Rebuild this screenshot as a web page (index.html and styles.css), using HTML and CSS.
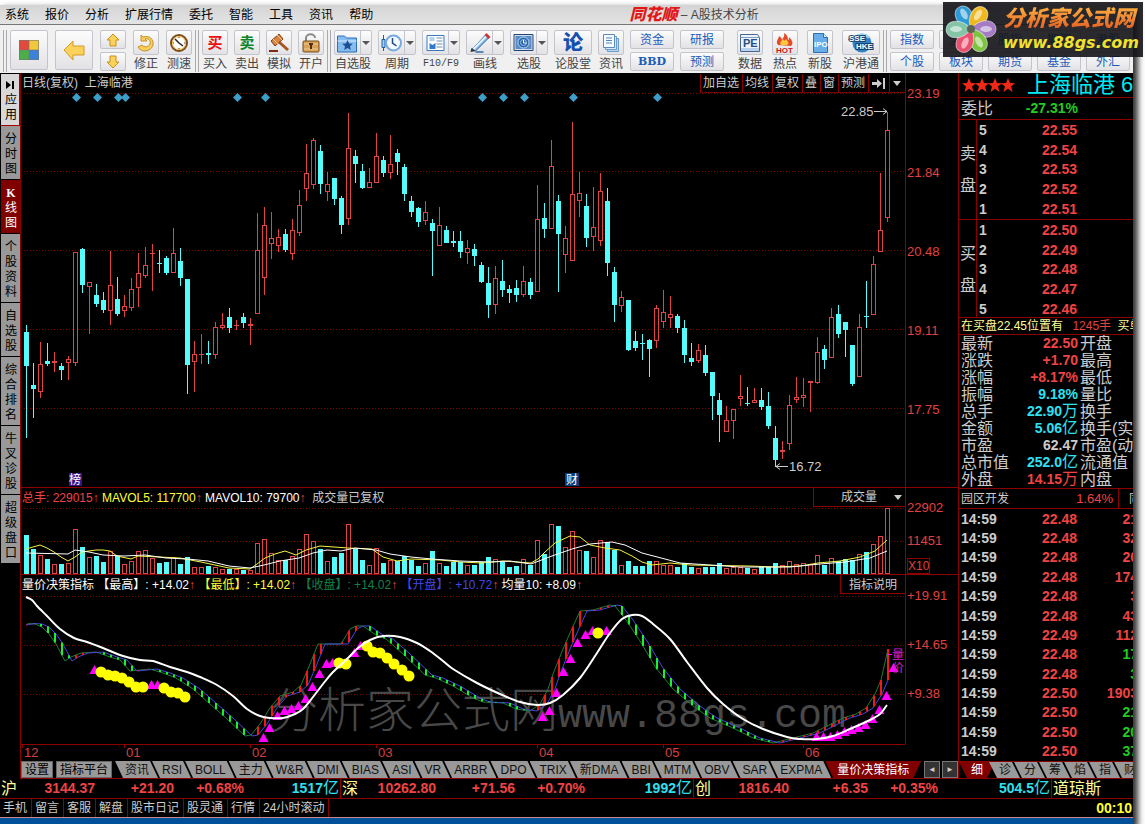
FILE: index.html
```html
<!DOCTYPE html>
<html lang="zh-CN">
<head>
  <meta charset="UTF-8">
  <meta name="viewport" content="width=device-width, initial-scale=1.0">
  <title>同花顺 - A股技术分析</title>
  <link rel="stylesheet" href="styles.css">
</head>
<body>
  <div class="window">
    <header class="menubar">
      <nav class="menu">
        <a href="#">系统</a>
        <a href="#">报价</a>
        <a href="#">分析</a>
        <a href="#">扩展行情</a>
        <a href="#">委托</a>
        <a href="#">智能</a>
        <a href="#">工具</a>
        <a href="#">资讯</a>
        <a href="#">帮助</a>
      </nav>
      <h1 class="title"><b>同花顺</b> – A股技术分析</h1>
    </header>

    <div class="toolbar">
      <span class="grip"></span>
      <div class="tool-group first">
        <button class="box big" aria-label="首页">
          <svg width="22" height="22" viewBox="0 0 22 22"><path fill="#e04a3c" d="M1 1h10v10H1z"/><path fill="#f0c83c" d="M11 1h10v10H11z"/><path fill="#4cae48" d="M1 11h10v10H1z"/><path fill="#3c80d8" d="M11 11h10v10H11z"/><path d="M1.500 1.500h19v19h-19zM11 1v20M1 11h20" fill="none" stroke="#777" stroke-opacity=".6"/></svg>
        </button>
        <button class="box big" aria-label="后退">
          <svg width="22" height="22" viewBox="0 0 22 22"><path d="M1 11 10 2v5h11v9H10v5z" fill="#fbd25a" stroke="#d59a22"/></svg>
        </button>
        <div class="stack">
          <button class="box half" aria-label="上一个"><svg width="14" height="14" viewBox="0 0 14 14"><path d="M7 1 13 7h-3v6H4V7H1z" fill="#fbd25a" stroke="#c98f1c"/></svg></button>
          <button class="box half" aria-label="下一个"><svg width="14" height="14" viewBox="0 0 14 14"><path d="M7 13 1 7h3V1h6v6h3z" fill="#fbd25a" stroke="#c98f1c"/></svg></button>
        </div>
        <button class="tool"><span class="box"><svg width="20" height="20" viewBox="0 0 20 20"><path d="M5 2v6h6L9 6c3-1 6 1 5 5-1 3-6 4-8 1L2 14c3 6 13 5 15-2 1-6-4-10-10-8z" fill="#f9cf58" stroke="#c4902a"/></svg></span>修正</button>
        <button class="tool"><span class="box"><svg width="20" height="20" viewBox="0 0 20 20"><circle cx="10" cy="10" r="8" fill="#fff" stroke="#7a4a1c" stroke-width="2"/><circle cx="10" cy="10" r="6.500" fill="none" stroke="#f0b83c"/><path d="M10 10 6 6M10 10l4 3" stroke="#222" stroke-width="1.500"/><path d="M10 4v1M10 15v1M4 10h1M15 10h1" stroke="#444"/></svg></span>测速</button>
      </div>
      <span class="grip"></span>
      <div class="tool-group">
        <button class="tool"><span class="box glyph buy-glyph">买</span>买入</button>
        <button class="tool"><span class="box glyph sell-glyph">卖</span>卖出</button>
        <button class="tool"><span class="box"><svg width="22" height="22" viewBox="0 0 22 22"><path d="m11 10 9 8" stroke="#a5561c" stroke-width="3"/><path d="m3 9 8-7 4 5-8 7z" fill="#d68540" stroke="#7c3c10"/><path d="m5 7 5 5M9 3l5 5" stroke="#f4c088"/><path d="M1 19h9" stroke="#7c2c10" stroke-width="2"/></svg></span>模拟</button>
        <button class="tool"><span class="box"><svg width="22" height="22" viewBox="0 0 22 22"><path d="M6 10V6c0-5 9-5 9 0" fill="none" stroke="#8a8a8a" stroke-width="2"/><rect x="3" y="9" width="16" height="11" rx="1" fill="#d8a258" stroke="#754a18"/><path d="M4 12h14M4 17h14" stroke="#f2cc90"/><path d="M9 12h4M11 12v5" stroke="#543010" stroke-width="2"/></svg></span>开户</button>
      </div>
      <span class="grip"></span>
      <div class="tool-group">
        <button class="tool wide"><span class="box split"><svg width="22" height="22" viewBox="0 0 22 22"><path d="M1 4h7l2 2h10v14H1z" fill="#86bdf0" stroke="#2d6cb8"/><path d="M1 9h19" stroke="#d6ebff"/><path d="m11 8 1.600 3.400 3.700.4-2.800 2.500.8 3.700-3.300-1.900L7.700 18l.8-3.700-2.800-2.500 3.700-.4z" fill="#1d4f94"/></svg><i></i></span>自选股</button>
        <button class="tool wide"><span class="box split"><svg width="22" height="22" viewBox="0 0 22 22"><path d="M3 3v16" stroke="#1f5ca8"/><path d="M1.500 7.500h3v8h-3z" fill="#9cd0ff" stroke="#1f5ca8"/><circle cx="13" cy="11" r="7.500" fill="#f3f9ff" stroke="#78a9dc" stroke-width="2"/><path d="M12 6v5l4 3" fill="none" stroke="#1f4888" stroke-width="1.500"/></svg><i></i></span>周期</button>
        <button class="tool wide"><span class="box split"><svg width="22" height="22" viewBox="0 0 22 22"><path d="M2.500 3.500h17v15h-17z" fill="#fff" stroke="#3978bd"/><path d="M5 6h5M5 8h5" stroke="#64a4e4"/><path d="M5 11h6v6H5z" fill="#2f7bd0"/><path d="m5 11 3 2 3-2" fill="#fff"/><path d="M12 6h6M12 9h6M12 12h6M12 15h6" stroke="#6c8fb0"/></svg><i></i></span><span class="mono">F10/F9</span></button>
        <button class="tool wide"><span class="box split"><svg width="22" height="22" viewBox="0 0 22 22"><path d="M3 18 17 3l3 3L7 19z" fill="#8abced" stroke="#285c9c"/><path d="m5 17 13-13" stroke="#e4f3ff" stroke-width="2"/><path d="m16 3 2-2 4 4-2 2z" fill="#c83838"/><path d="m2 20 1-4 4 3z" fill="#333"/><path d="M7 20h8" stroke="#2e68a8" stroke-width="1.500"/></svg><i></i></span>画线</button>
        <button class="tool wide"><span class="box split"><svg width="22" height="22" viewBox="0 0 22 22"><path d="M1.500 2.500h19v16h-19z" fill="#d1dded" stroke="#244474"/><path d="M3 4h16v13H3z" fill="#5c8cc8"/><circle cx="11" cy="10.500" r="5.500" fill="#2c62a6" stroke="#b8dcfa"/><circle cx="11" cy="10.500" r="3" fill="none" stroke="#92c5f4"/><path d="M11 8v3h3" fill="none" stroke="#fff"/></svg><i></i></span>选股</button>
        <button class="tool wide"><span class="box glyph forum-glyph">论</span>论股堂</button>
        <button class="tool"><span class="box"><svg width="20" height="20" viewBox="0 0 20 20"><path d="M6.500 5.500h11v13h-11z" fill="#b8d8f5" stroke="#6e9cc8"/><path d="M4.500 3.500h11v13h-11z" fill="#d4e9fb" stroke="#6e9cc8"/><path d="M2.500 1.500h11v13h-11z" fill="#f6fbff" stroke="#5a8cbf"/><path d="M5 5h6M5 7.500h6M5 10h6" stroke="#4f87bf"/></svg></span>资讯</button>
        <div class="stack"><button class="box link">资金</button><button class="box link serif">BBD</button></div>
        <div class="stack"><button class="box link">研报</button><button class="box link">预测</button></div>
      </div>
      <div class="tool-group apart">
        <button class="tool"><span class="box"><svg width="22" height="22" viewBox="0 0 22 22"><path d="M1.500 2.500h17l2 3v14h-19z" fill="#ecf3fa" stroke="#49698c"/><path d="M2 16h18v3H2z" fill="#b8d0ec"/><path d="M1.500 5.500h19" stroke="#7c9cc0"/><text x="4" y="15" font-size="11" font-weight="bold" fill="#234f86" font-family="Liberation Sans, sans-serif">PE</text></svg></span>数据</button>
        <button class="tool"><span class="box"><svg width="22" height="22" viewBox="0 0 22 22"><path d="M4 13C1 9 5 7 5 4c2 1 3 3 3 4 1-2 3-4 2-7 4 2 4 6 4 7 1 0 1-2 1-3 3 3 5 6 2 9z" fill="#e44a28"/><path d="M7 13c-2-3 1-4 2-6 1 2 2 2 3 0 2 3 4 4 1 6z" fill="#ffc83c"/><text x="2" y="21" font-size="8" font-weight="bold" fill="#c81818" font-family="Liberation Sans, sans-serif">HOT</text></svg></span>热点</button>
        <button class="tool"><span class="box"><svg width="20" height="22" viewBox="0 0 20 22"><path d="M3.500 1.500h10l4 4v15h-14z" fill="#69aee9" stroke="#2c6eb0"/><path d="M13.500 1.500v4h4" fill="#dff0ff" stroke="#2c6eb0"/><text x="4" y="15" font-size="8" font-weight="bold" fill="#fff" font-family="Liberation Sans, sans-serif">IPO</text></svg></span>新股</button>
        <button class="tool wide"><span class="box"><svg width="26" height="22" viewBox="0 0 26 22"><circle cx="14" cy="11" r="9.500" fill="#2f83c5"/><path d="M7 5c4-4 11-3 14 1" fill="none" stroke="#9cd4f6" stroke-width="2"/><g font-size="8" font-weight="bold" font-family="Liberation Sans, sans-serif" fill="#fff" stroke="#17426e" stroke-width="2" paint-order="stroke"><text x="1" y="9">SSE</text><text x="8" y="17">HKE</text></g></svg></span>沪港通</button>
      </div>
      <span class="grip"></span>
      <div class="tool-group tight">
        <div class="stack"><button class="box link">指数</button><button class="box link">个股</button></div>
        <div class="stack"><button class="box link">全球</button><button class="box link">板块</button></div>
        <div class="stack"><button class="box link">股指</button><button class="box link">期货</button></div>
        <div class="stack"><button class="box link">期权</button><button class="box link">基金</button></div>
        <div class="stack"><button class="box link">港股</button><button class="box link">外汇</button></div>
      </div>
    </div>

    <main class="main">
      <nav class="side">
        <button class="light"><svg width="9" height="8" viewBox="0 0 9 8"><path d="m0 0 5 4-5 4zM6 0h2v8H6z"/></svg>应用</button>
        <button>分时图</button>
        <button class="on"><b>K</b>线图</button>
        <button>个股资料</button>
        <button>自选股</button>
        <button>综合排名</button>
        <button>牛叉诊股</button>
        <button>超级盘口</button>
      </nav>

      <div class="center">
        <section class="panel">
          <div class="plot">
            <div class="plot-head">
              <h2>日线(复权)&nbsp; 上海临港</h2>
              <div class="chart-tools">
                <button>加自选</button><button>均线</button><button>复权</button><button>叠</button><button>窗</button><button>预测</button><button aria-label="跳到最后"><svg width="13" height="11" viewBox="0 0 13 11"><path d="M0 4h5V1l5 4.500L5 10V7H0zM11 0h2v11h-2z" fill="#ccc"/></svg></button><button aria-label="更多"><svg width="8" height="5" viewBox="0 0 8 5"><path d="M0 0h8L4 5z" fill="#ccc"/></svg></button>
              </div>
            </div>
            <svg id="price" viewBox="21 93 884 394"></svg>
          </div>
          <div class="axis price-axis"><span>23.19</span><span>21.84</span><span>20.48</span><span>19.11</span><span>17.75</span></div>
        </section>

        <section class="panel">
          <div class="plot">
            <div class="plot-head volume-head">
              <p><span class="red">总手: 229015↑</span> <span class="yellow">MAVOL5: 117700</span><span class="red">↑</span> <span class="white">MAVOL10: 79700</span><span class="red">↑</span>&nbsp; 成交量已复权</p>
              <label class="pick"><select aria-label="指标"><option>成交量</option></select><svg width="8" height="5" viewBox="0 0 8 5"><path d="M0 0h8L4 5z" fill="#ccc"/></svg></label>
            </div>
            <svg id="volume" viewBox="21 508 884 66"></svg>
          </div>
          <div class="axis volume-axis"><span>22902</span><span>11451</span><span class="unit">X10</span></div>
        </section>

        <section class="panel">
          <div class="plot">
            <div class="plot-head">
              <p><span class="white">量价决策指标 【最高】: +14.02</span><span class="red">↑</span> <span class="yellow">【最低】: +14.02</span><span class="red">↑</span> <span class="dkgreen">【收盘】: +14.02</span><span class="red">↑</span> <span class="blue">【开盘】: +10.72</span><span class="red">↑</span> <span class="white">均量10: +8.09</span><span class="red">↑</span></p>
              <button class="explain">指标说明</button>
            </div>
            <svg id="signal" viewBox="21 594 884 149"></svg>
          </div>
          <div class="axis signal-axis"><span>+19.91</span><span>+14.65</span><span>+9.38</span></div>
        </section>
        <svg id="months" viewBox="21 743 937 17"></svg>

        <nav class="tabs">
          <button class="square">设置</button>
          <button class="square">指标平台</button>
          <div class="slants">
            <button>资讯</button><button>RSI</button><button>BOLL</button><button>主力</button><button>W&amp;R</button><button>DMI</button><button>BIAS</button><button>ASI</button><button>VR</button><button>ARBR</button><button>DPO</button><button>TRIX</button><button>新DMA</button><button>BBI</button><button>MTM</button><button>OBV</button><button>SAR</button><button>EXPMA</button><button class="on">量价决策指标</button>
          </div>
          <div class="scroll"><button aria-label="向左">◄</button><button aria-label="向右">►</button></div>
        </nav>
      </div>

      <aside class="quote">
        <h2 class="stock"><svg width="54" height="14" viewBox="0 0 54 14"><defs><path id="star" d="m7 0 2 5 5 .2-4 3.200L11.500 14 7 10.700 2.500 14 4 8.400 0 5.200 5 5z" fill="#f02818"/></defs><use href="#star"/><use href="#star" x="13"/><use href="#star" x="26"/><use href="#star" x="39"/></svg><span>上海临港 6</span></h2>
        <p class="ratio"><span>委比</span><b>-27.31%</b></p>
        <div class="book">
          <span class="side-name">卖盘</span>
          <table>
            <tr><th>5</th><td>22.55</td></tr>
            <tr><th>4</th><td>22.54</td></tr>
            <tr><th>3</th><td>22.53</td></tr>
            <tr><th>2</th><td>22.52</td></tr>
            <tr><th>1</th><td>22.51</td></tr>
          </table>
        </div>
        <div class="book bids">
          <span class="side-name">买盘</span>
          <table>
            <tr><th>1</th><td>22.50</td></tr>
            <tr><th>2</th><td>22.49</td></tr>
            <tr><th>3</th><td>22.48</td></tr>
            <tr><th>4</th><td>22.47</td></tr>
            <tr><th>5</th><td>22.46</td></tr>
          </table>
        </div>
        <p class="notice">在买盘22.45位置有 <span class="hands">1245手</span> 买单</p>
        <table class="stats">
          <tr><th>最新</th><td class="red">22.50</td><th>开盘</th></tr>
          <tr><th>涨跌</th><td class="red">+1.70</td><th>最高</th></tr>
          <tr><th>涨幅</th><td class="red">+8.17%</td><th>最低</th></tr>
          <tr><th>振幅</th><td class="cyan">9.18%</td><th>量比</th></tr>
          <tr><th>总手</th><td class="cyan">22.90<i>万</i></td><th>换手</th></tr>
          <tr><th>金额</th><td class="cyan">5.06<i>亿</i></td><th>换手(实)</th></tr>
          <tr><th>市盈</th><td>62.47</td><th>市盈(动)</th></tr>
          <tr><th>总市值</th><td class="cyan">252.0<i>亿</i></td><th>流通值</th></tr>
          <tr><th>外盘</th><td class="red">14.15<i>万</i></td><th>内盘</th></tr>
        </table>
        <p class="sector"><span>园区开发</span><span class="red">1.64%</span><span class="cut">同</span></p>
        <table class="ticks" id="ticks"></table>
        <nav class="tabs quote-tabs">
          <div class="slants"><button class="on">细</button><button>诊</button><button>分</button><button>筹</button><button>焰</button><button>指</button><button>财</button></div>
        </nav>
      </aside>
    </main>

    <div class="indices">
      <p><span>沪</span><b>3144.37</b><b>+21.20</b><b>+0.68%</b><b class="cyan">1517<i>亿</i></b></p>
      <p><span>深</span><b>10262.80</b><b>+71.56</b><b>+0.70%</b><b class="cyan">1992<i>亿</i></b></p>
      <p><span>创</span><b>1816.40</b><b>+6.35</b><b>+0.35%</b><b class="cyan">504.5<i>亿</i></b></p>
      <p><span>道琼斯</span></p>
    </div>
    <footer class="status">
      <a href="#">手机</a><a href="#">留言</a><a href="#">客服</a><a href="#">解盘</a><a href="#">股市日记</a><a href="#">股灵通</a><a href="#">行情</a><a href="#">24小时滚动</a>
      <time>00:10</time>
    </footer>
  </div>

  <div class="site-badge">
    <svg width="54" height="54" viewBox="0 0 54 54">
      <defs><path id="petal" d="M27 27C15 18 17 2 27 2s12 16 0 25z"/></defs>
      <g stroke="#fff" stroke-opacity=".5">
        <use href="#petal" fill="#2d9ad8" transform="rotate(-28 27 27)"/>
        <use href="#petal" fill="#f0b820" transform="rotate(32 27 27)"/>
        <use href="#petal" fill="#a57cc4" transform="rotate(90 27 27)"/>
        <use href="#petal" fill="#7cc440" transform="rotate(150 27 27)"/>
        <use href="#petal" fill="#ea5070" transform="rotate(205 27 27)"/>
        <use href="#petal" fill="#86c4a8" transform="rotate(268 27 27)"/>
      </g>
      <g fill="#fff" fill-opacity=".55">
        <ellipse cx="20" cy="12" rx="3" ry="6" transform="rotate(-28 20 12)"/>
        <ellipse cx="34" cy="13" rx="3" ry="6" transform="rotate(32 34 13)"/>
        <ellipse cx="42" cy="27" rx="6" ry="3"/>
        <ellipse cx="35" cy="40" rx="3" ry="6" transform="rotate(-30 35 40)"/>
        <ellipse cx="21" cy="41" rx="3" ry="6" transform="rotate(25 21 41)"/>
        <ellipse cx="12" cy="27" rx="6" ry="3"/>
      </g>
      <circle cx="27" cy="27" r="4" fill="#5c6454"/>
    </svg>
    <p><b>分析家公式网</b><em>www.88gs.com</em></p>
  </div>

  <script>
    const RED = '#e04444';
    const CYAN = '#54fcfc';
    const STEP = 7;
    const LEFT = 24;

    // direction, high, body top, body bottom, low, volume top
    const candles = [
      'd325 332 366 438 535', 'd363 385 389 418 549', 'u342 364 392 398 555', 'd343 361 364 366 559', 'u352 361 363 372 564',
      'd363 366 370 380 564', 'u356 359 363 380 563', 'u252 252 363 366 529', 'd248 249 285 293 547', 'u282 282 287 334 557',
      'd284 295 304 307 556', 'd292 300 310 313 562', 'u251 285 311 325 551', 'd277 299 314 316 556', 'u295 306 311 317 564',
      'u278 289 308 311 561', 'u253 273 288 307 551', 'u247 265 276 278 550', 'u244 253 254 291 558', 'd250 263 264 273 563',
      'd256 258 273 275 562', 'u228 253 273 273 557', 'd248 261 278 286 564', 'd279 279 365 394 557', 'u341 354 362 392 567',
      'u334 354 355 364 567', 'd341 353 355 364 566', 'u322 327 355 359 567', 'u313 325 328 329 569', 'd308 317 328 333 569',
      'u320 325 326 330 569', 'd313 317 323 328 570', 'u318 324 326 345 570', 'u213 250 314 314 543', 'u207 225 278 295 539',
      'u212 238 244 259 553', 'u229 237 246 252 560', 'd229 234 250 252 560', 'u219 230 254 260 556', 'u190 205 233 236 549',
      'u144 173 189 201 534', 'u138 140 185 189 541', 'd145 151 184 194 549', 'u172 184 192 201 561', 'd178 178 199 205 557',
      'd196 198 225 234 553', 'u113 148 219 225 524', 'd150 156 164 183 549', 'd164 171 188 189 560', 'u168 182 188 188 565',
      'u133 156 183 183 548', 'd156 160 173 177 563', 'u135 164 173 179 560', 'd149 153 162 175 561', 'd164 167 194 201 556',
      'd196 201 212 217 560', 'd207 208 222 227 566', 'u201 212 221 225 563', 'd219 223 231 276 551', 'u207 225 246 246 563',
      'd226 230 243 243 566', 'd231 241 243 247 562', 'd231 241 252 258 562', 'u240 248 253 264 565', 'd244 249 256 266 565',
      'd262 265 282 283 562', 'd267 283 305 318 557', 'u266 278 305 314 559', 'd260 281 290 297 562', 'd285 289 293 303 567',
      'd280 288 295 302 566', 'u266 281 295 297 559', 'd278 282 295 299 565', 'u185 219 292 292 540', 'd203 218 229 238 554',
      'u140 166 229 229 524', 'd195 201 234 292 526', 'u226 238 255 273 547', 'u122 194 261 261 531', 'u172 193 201 217 550',
      'd194 206 238 247 551', 'u187 227 237 251 557', 'u173 191 241 246 540', 'd188 201 263 276 542', 'd267 272 305 322 550',
      'u291 297 306 312 565', 'd300 300 350 351 561', 'd331 341 348 351 566', 'd334 343 344 360 566', 'd339 340 349 377 561',
      'u305 308 341 348 561', 'u290 312 322 328 565', 'u296 314 318 328 565', 'd314 316 328 333 567', 'd320 328 355 363 563',
      'd343 358 362 366 567', 'u344 350 361 363 568', 'd345 355 373 376 567', 'd372 372 396 420 567', 'd393 400 415 442 563',
      'u406 420 432 432 568', 'u409 409 421 439 567', 'u375 396 399 406 567', 'd387 403 404 406 568', 'u388 400 403 403 569',
      'd388 400 407 410 567', 'd392 406 426 429 567', 'd426 438 460 467 563', 'u441 450 452 459 565', 'u395 405 444 450 561',
      'u377 397 400 403 564', 'u378 395 398 407 563', 'u381 381 383 412 564', 'u337 352 383 384 555', 'd345 349 360 369 565',
      'u308 317 358 358 558', 'd305 314 334 338 561', 'd322 322 330 357 559', 'd345 345 384 386 560', 'u314 327 377 377 554',
      'd281 316 317 328 552', 'u256 264 315 315 544', 'u173 230 252 252 536', 'u112 130 218 222 508'
    ].map(row => ({ up: row[0] === 'u', v: row.slice(1).split(' ').map(Number) }));

    function box(x, top, bottom, up) {
      if (!up || bottom - top < 3) {
        return `<path d="M${x} ${top}h5v${Math.max(bottom - top, 1)}h-5z" fill="${up ? RED : CYAN}"/>`;
      }
      return `<path d="M${x + 0.5} ${top + 0.5}h4v${bottom - top - 1}h-4z" fill="#000" stroke="${RED}"/>`;
    }

    function dotted(rows) {
      return rows.map(y => `<path class="grid" d="M24 ${y}.5H905"/>`).join('');
    }

    // curve through all points
    function smooth(points) {
      let d = 'M' + points[0];
      for (let k = 0; k < points.length - 1; k++) {
        const a = points[Math.max(k - 1, 0)];
        const b = points[k];
        const c = points[k + 1];
        const e = points[Math.min(k + 2, points.length - 1)];
        d += `C${b[0] + (c[0] - a[0]) / 6} ${b[1] + (c[1] - a[1]) / 6} ${c[0] - (e[0] - b[0]) / 6} ${c[1] - (e[1] - b[1]) / 6} ${c[0]} ${c[1]}`;
      }
      return d;
    }

    // price chart
    const notices = [76, 97, 118, 125, 237, 265, 482, 503, 524, 573, 657];
    let price = dotted([93, 171, 250, 329, 408]);
    candles.forEach((c, i) => {
      const x = LEFT + i * STEP;
      const [high, top, bottom, low] = c.v;
      price += `<path d="M${x + 2.5} ${high}V${low}" stroke="${c.up ? RED : CYAN}"/>` + box(x, top, bottom, c.up);
    });
    price = `<g shape-rendering="crispEdges">${price}</g>`;
    notices.forEach(x => {
      price += `<path d="M${x - 4} 97.500l4.500-4.500 4.500 4.500-4.500 4.500z" fill="#3c9fc8"/>`;
    });
    price += `
      <text x="841" y="116" class="mark">22.85</text>
      <path d="M874 111.500h13m-4-3 4 3-4 3" fill="none" stroke="#ccc"/>
      <text x="789" y="471" class="mark">16.72</text>
      <path d="M788 466.500h-12m4-3-4 3 4 3" fill="none" stroke="#ccc"/>
      <rect x="69" y="473" width="13" height="13" fill="#3c1482"/><text x="69" y="484" class="flag">榜</text>
      <rect x="565" y="473" width="14" height="13" fill="#0c3c78"/><text x="566" y="484" class="flag">财</text>`;
    document.getElementById('price').innerHTML = price;

    // volume chart
    const ma5 = '26,549 33,547 40,545 47,548 54,552 61,557 68,561 75,557 82,552 96,550 103,550 110,551 117,556 131,559 138,556 159,557 180,558 201,562 215,565 229,568 250,569 257,564 265,558 275,554 285,551 296,555 306,550 320,546 334,547 348,548 372,549 383,557 397,561 411,559 440,560 461,562 482,563 503,561 531,563 538,559 545,552 555,543 570,536 580,537 590,545 605,548 620,550 632,556 642,562 652,565 670,563 690,565 750,566 775,567 800,566 818,563 840,561 860,557 875,551 887,540';
    const ma10 = '26,553 68,554 75,550 89,552 103,555 124,556 145,555 166,558 187,559 208,561 229,566 250,568 264,565 280,561 299,558 313,553 327,550 341,551 355,548 376,550 390,554 411,557 432,559 460,561 490,562 510,561 531,564 552,556 572,549 590,544 612,542 625,545 642,553 665,559 680,563 710,565 740,567 790,567 820,564 845,562 870,558 887,551';
    let volume = dotted([508, 541]);
    candles.forEach((c, i) => {
      volume += box(LEFT + i * STEP, c.v[4], 574, c.up);
    });
    document.getElementById('volume').innerHTML = `<g shape-rendering="crispEdges">${volume}</g>
      <polyline points="${ma5}" fill="none" stroke="#f4f440"/>
      <polyline points="${ma10}" fill="none" stroke="#fff"/>`;

    // signal chart
    const base = [[26, 624], [35, 622.5], [42, 623], [49, 626], [56, 633], [63, 643], [72, 660], [78, 656], [88, 652], [103, 651], [117, 656], [127, 659], [137, 670], [157, 668], [170, 672], [183, 677], [200, 688], [217, 703], [233, 717], [252, 735], [258, 734], [267, 723], [277, 707], [287, 695], [300, 691], [308, 684], [317, 663], [325, 643], [348, 643], [357, 628], [363, 625], [370, 625], [383, 634], [393, 638], [410, 653], [432, 674], [443, 677], [460, 685], [480, 697], [490, 701], [510, 702], [523, 708], [537, 710], [547, 703], [555, 688], [560, 673], [570, 648], [577, 632], [587, 610], [600, 609], [617, 604], [622, 605], [633, 619], [647, 640], [663, 667], [680, 688], [700, 705], [717, 717], [740, 727], [760, 737], [780, 742], [800, 737], [820, 732], [850, 717], [863, 713], [873, 707], [882, 693], [888, 679], [895, 648]];

    function baseAt(x) {
      for (let k = 1; k < base.length; k++) {
        const [x0, y0] = base[k - 1];
        const [x1, y1] = base[k];
        if (x <= x1) return y0 + (y1 - y0) * (x - x0) / (x1 - x0);
      }
      return base[base.length - 1][1];
    }

    const average = [[26, 596], [32, 599], [37, 605], [47, 615], [60, 628], [74, 637], [87, 641], [103, 647], [123, 655], [140, 659], [153, 660], [170, 666], [187, 671], [200, 676], [217, 684], [233, 695], [247, 708], [260, 715], [270, 717], [283, 717], [295, 713], [303, 708], [313, 696], [323, 683], [333, 671], [347, 658], [358, 647], [370, 639], [383, 635], [400, 636], [417, 642], [430, 650], [443, 660], [453, 668], [477, 682], [500, 693], [520, 701], [537, 704], [550, 702], [563, 694], [580, 677], [597, 652], [610, 632], [622, 618], [632, 614], [642, 615], [653, 623], [670, 638], [687, 661], [707, 687], [723, 703], [743, 718], [763, 728], [787, 736], [800, 738], [817, 738], [833, 735], [850, 728], [870, 719], [880, 713], [887, 704]];
    const triangles = [[94, 669], [151, 684], [157, 684], [263, 737], [269, 727], [277, 715], [284, 710], [291, 708], [298, 705], [305, 698], [312, 686], [319, 673], [326, 663], [332, 662], [354, 652], [360, 645], [542, 716], [549, 710], [556, 692], [563, 671], [570, 658], [577, 642], [585, 634], [592, 630], [606, 630], [816, 736], [823, 736], [830, 736], [837, 734], [844, 731], [851, 729], [858, 727], [865, 724], [872, 718], [879, 709], [886, 695], [893, 667]];
    const dots = [[101, 671], [108, 674], [115, 675], [122, 677], [129, 681], [136, 686], [143, 686], [164, 687], [171, 691], [178, 692], [185, 696], [339, 662], [346, 663], [367, 645], [373, 651], [380, 652], [387, 657], [394, 663], [402, 669], [409, 675], [598, 632]];

    let signal = `<g shape-rendering="crispEdges">${dotted([595, 644, 693])}</g>
      <text x="270" y="726" class="stamp">分析家公式网<tspan class="stamp-url">www.88gs.com</tspan></text>`;
    const open = base.filter(p => p[0] < 890).map(p => p.join(','));
    const close = base.slice(1).map(p => (p[0] - 7) + ',' + p[1]);
    signal += `<polyline points="${close.join(' ')}" fill="none" stroke="#1c7c30"/>
      <polyline points="${open.join(' ')}" fill="none" stroke="#4646dc"/>`;
    candles.forEach((c, i) => {
      const x = LEFT + i * STEP + 3;
      const from = baseAt(x);
      const to = baseAt(x + 7);
      signal += `<path d="M${x} ${from}V${to}" stroke="${to < from ? '#f01818' : '#18f030'}" stroke-width="2"/>`;
    });
    triangles.forEach(([x, y]) => {
      signal += `<path d="M${x + 0.5} ${y - 5}l5 9h-10z" fill="#f0f"/>`;
    });
    dots.forEach(([x, y]) => {
      signal += `<circle cx="${x}" cy="${y}" r="5.500" fill="#ff0"/>`;
    });
    signal += `<path d="${smooth(average)}" fill="none" stroke="#fff" stroke-width="2"/>
      <path d="M887 653.500h5" stroke="#f0f"/>
      <text x="892" y="658" class="hint">量</text><text x="892" y="671" class="hint">价</text>`;
    document.getElementById('signal').innerHTML = signal;

    const months = [['12', 22], ['01', 124], ['02', 250], ['03', 376], ['04', 537], ['05', 663], ['06', 803]];
    document.getElementById('months').innerHTML = '<path d="M21 743.500H905" stroke="#8c0000"/>' + months.map(([name, x]) =>
      `<path d="M${x}.5 743v4" stroke="#8c0000"/><text x="${x + 2}" y="756" class="month">${name}</text>`).join('');

    const ticks = [
      ['22.48', 21, 'red'], ['22.48', 32, 'red'], ['22.48', 20, 'red'], ['22.48', 174, 'red'], ['22.48', 3, 'red'],
      ['22.48', 43, 'red'], ['22.49', 112, 'red'], ['22.48', 17, 'green'], ['22.48', 3, 'green'], ['22.50', 1903, 'red'],
      ['22.50', 21, 'green'], ['22.50', 20, 'green'], ['22.50', 37, 'green']
    ];
    document.getElementById('ticks').innerHTML = ticks.map(([p, n, color]) =>
      `<tr><th>14:59</th><td class="red">${p}</td><td class="${color}">${n}</td></tr>`).join('');
  </script>
</body>
</html>
```
FILE: styles.css
```css
* {
  box-sizing: border-box;
}

body {
  margin: 0;
  padding: 5px 12px 0 0;
  background: #fff;
  font-family: "Liberation Sans", "Noto Sans CJK SC", sans-serif;
  font-size: 12px;
  line-height: 16px;
  color: #ccc;
  overflow: hidden;
}

h1, h2, p {
  margin: 0;
  font-size: inherit;
  font-weight: normal;
}

a {
  color: inherit;
  text-decoration: none;
}

i {
  font-style: normal;
  font-weight: normal;
}

button, select {
  margin: 0;
  padding: 0;
  border: none;
  background: none;
  color: inherit;
  font: inherit;
  white-space: nowrap;
}

table {
  border-collapse: collapse;
}

th, td {
  padding: 0;
  text-align: left;
}

svg {
  display: block;
  flex: none;
}

.red { color: #f04444; }
.yellow { color: #ff3; }
.white { color: #fff; }
.cyan { color: #30e0f0; }
.green { color: #2c2; }
.dkgreen { color: #148048; }
.blue { color: #4646e6; }

.window {
  background: #000;
  border-bottom: 6px solid #00509a;
  box-shadow: 4px 4px 6px 1px #333;
}

/* menu and toolbar */
.menubar {
  display: flex;
  align-items: center;
  height: 20px;
  padding-left: 5px;
  border-bottom: 1px solid #777;
  background: linear-gradient(#d4d4d4, #e4e4e4);
  color: #000;
}

.menu {
  display: flex;
  gap: 16px;
}

.title {
  flex: 1;
  padding-right: 118px;
  text-align: center;
  color: #444;
}

.title b {
  color: #e01818;
  font-size: 16px;
  font-style: italic;
  font-weight: 900;
  vertical-align: -1px;
}

.toolbar {
  display: flex;
  height: 48px;
  padding-top: 5px;
  background: #f0f0f0;
  overflow: hidden;
}

.grip {
  flex: none;
  width: 4px;
  height: 42px;
  margin: 0 3px;
  border: solid #aaa;
  border-width: 0 1px;
}

.tool-group {
  display: flex;
  gap: 6px;
}

.tool-group.first {
  gap: 7px;
}

.tool-group.apart {
  gap: 9px;
  margin-left: 13px;
}

.tool-group.tight {
  gap: 5px;
}

.box {
  display: flex;
  align-items: center;
  justify-content: center;
  width: 100%;
  height: 25px;
  border: 1px solid #c4c4cc;
  border-radius: 2px;
  background: linear-gradient(#fcfcfc, #e2e2e6);
}

.box.big {
  width: 38px;
  height: 40px;
}

.box.half {
  width: 26px;
  height: 19px;
}

.box.link {
  width: 44px;
  height: 19px;
  color: #1c5cb8;
}

.box.link.serif {
  font-family: "DejaVu Serif", serif;
  font-size: 11px;
  font-weight: bold;
}

.stack {
  display: flex;
  flex-direction: column;
  gap: 3px;
}

.tool {
  width: 26px;
  display: flex;
  flex: none;
  flex-direction: column;
  align-items: center;
  color: #444;
  line-height: 18px;
}

.tool.wide {
  width: 38px;
}

.box.split svg {
  width: 25px;
}

.box.split i {
  display: flex;
  flex: 1;
  align-items: center;
  justify-content: center;
  height: 100%;
  border-left: 1px solid #c4c4cc;
}

.box.split i::before {
  content: "";
  border: solid transparent;
  border-width: 4px 4px 0;
  border-top-color: #555;
}

.tool .mono {
  font-family: "Liberation Mono", monospace;
  font-size: 10px;
}

.glyph {
  font-size: 15px;
  font-weight: bold;
}

.buy-glyph { color: #e81010; }
.sell-glyph { color: #0a8428; }

.forum-glyph {
  color: #1850b0;
  font-size: 20px;
  font-weight: 900;
}

/* main area */
.main {
  display: grid;
  grid-template-columns: 21px minmax(0, 1fr) 175px;
}

.side {
  display: flex;
  flex-direction: column;
  padding: 1px 0 0 1px;
  border-right: 1px solid #8c0000;
}

.side button {
  padding: 6px 3px 2px 4px;
  border-bottom: 1px solid #000;
  background: #999;
  color: #000;
  line-height: 15px;
  white-space: normal;
  word-break: break-all;
}

.side .light {
  border: solid #a00;
  border-width: 0 1px 1px 0;
  background: #d8d8d8;
}

.side svg {
  margin: 1px 0 4px 1px;
}

.side b {
  display: block;
  font-family: "Liberation Serif", serif;
}

.side .on {
  background: #800000;
  color: #fff;
}

.panel {
  display: grid;
  grid-template-columns: minmax(0, 1fr) 53px;
  border-bottom: 1px solid #8c0000;
}

.panel + .panel + .panel {
  border-bottom: none;
}

.plot > svg,
#months {
  width: 100%;
  height: auto;
}

.plot-head {
  display: flex;
  justify-content: space-between;
  height: 20px;
  line-height: 20px;
  white-space: nowrap;
}

.plot-head p,
.plot-head h2 {
  padding-left: 1px;
}

.chart-tools {
  display: flex;
  margin-top: 1px;
  border-bottom: 1px dotted #8c0000;
}

.chart-tools button {
  padding: 0 3px 0 2px;
  border-left: 1px solid #8c0000;
  line-height: 18px;
}

.chart-tools button:nth-child(n+7) {
  padding: 0 4px 0 3px;
}

.pick {
  display: flex;
  align-items: center;
  gap: 16px;
  height: 19px;
  padding: 0 3px 0 27px;
  border: solid #8c0000;
  border-width: 0 0 1px 1px;
}

.pick select {
  appearance: none;
}

.explain {
  height: 19px;
  padding: 0 8px;
  border: solid #8c0000;
  border-width: 0 0 1px 1px;
}

.grid {
  stroke: #800000;
  stroke-dasharray: 1 2;
}

.mark {
  fill: #ccc;
  font-size: 13px;
}

.flag {
  fill: #fff;
  font-size: 12px;
}

.stamp {
  fill: #484848;
  font-size: 48px;
  font-weight: 300;
}

.stamp-url {
  font-family: "Liberation Mono", monospace;
  font-size: 40px;
}

.hint {
  fill: #d020d0;
  font-size: 12px;
}

.month {
  fill: #d84040;
  font-size: 13px;
}

.axis {
  display: flex;
  flex-direction: column;
  align-items: flex-start;
  padding-left: 1px;
  border-left: 1px solid #8c0000;
  color: #e04040;
  font-size: 13px;
}

.price-axis {
  gap: 63px;
  padding-top: 13px;
}

.volume-axis {
  gap: 17px;
  padding-top: 12px;
}

.volume-axis .unit {
  margin-top: -8px;
  border: 1px solid #8c0000;
  font-size: 12px;
  line-height: 14px;
}

.signal-axis {
  gap: 33px;
  padding-top: 13px;
}

.tabs {
  display: flex;
  gap: 3px;
  height: 18px;
  border-bottom: 1px solid #8c0000;
  line-height: 16px;
}

.tabs .square {
  padding: 0 3px;
  border: 1px solid #666;
  background: #999;
  color: #000;
  line-height: 14px;
}

.slants {
  display: flex;
  min-width: 0;
}

.slants button {
  flex: none;
  padding: 0 9px 0 10px;
  margin-right: -6px;
  background: #999;
  color: #111;
  clip-path: polygon(0 0, calc(100% - 8px) 0, 100% 100%, 8px 100%);
}

.slants .on {
  padding: 0 12px;
  background: #800000;
  color: #fff;
  clip-path: polygon(0 0, 100% 0, calc(100% - 8px) 100%, 8px 100%);
}

.scroll {
  display: flex;
  gap: 2px;
  margin-left: auto;
}

.scroll button {
  width: 16px;
  border: 1px solid #777;
  background: #333;
  font-size: 8px;
  line-height: 14px;
}

/* quote column */
.quote {
  display: flex;
  flex-direction: column;
  min-width: 0;
  border-left: 1px solid #8c0000;
  overflow: hidden;
  white-space: nowrap;
}

.stock {
  display: flex;
  align-items: center;
  gap: 11px;
  height: 25px;
  padding-left: 3px;
  border-bottom: 1px solid #8c0000;
  color: #00e8f4;
  font-size: 22px;
}

.ratio {
  display: flex;
  justify-content: space-between;
  width: 119px;
  height: 21px;
  padding-left: 2px;
  color: #2c2;
  line-height: 21px;
}

.ratio span {
  color: #ccc;
  font-size: 16px;
}

.ratio b {
  font-size: 14px;
}

.book {
  display: flex;
  height: 100px;
  border-top: 1px solid #8c0000;
  overflow: hidden;
}

.book.bids {
  height: 98px;
}

.side-name {
  width: 18px;
  padding: 18px 1px 0;
  border-right: 1px solid #8c0000;
  font-size: 16px;
  line-height: 32px;
  white-space: normal;
}

.book table {
  width: 100px;
  height: 99px;
}

.book tr {
  height: 19px;
  font-size: 14px;
}

.book th {
  padding-left: 2px;
}

.book td {
  color: #f04444;
  font-weight: bold;
  text-align: right;
}

.notice {
  height: 18px;
  padding-left: 2px;
  border: solid #8c0000;
  border-width: 1px 0;
  color: #ff9;
}

.hands {
  margin: 0 3px 0 6px;
  color: #e04444;
}

.stats {
  width: 220px;
  table-layout: fixed;
}

.stats tr {
  height: 17px;
  font-size: 14px;
  line-height: 17px;
}

.stats th {
  padding-left: 2px;
  font-size: 16px;
  font-weight: normal;
}

.stats th:first-child {
  width: 49px;
}

.stats td {
  width: 70px;
  font-weight: bold;
  text-align: right;
}

.stats th,
.stats td {
  vertical-align: middle;
}

.stats i,
.indices i {
  font-size: 16px;
  line-height: 0;
}

.sector {
  display: flex;
  height: 21px;
  padding-left: 2px;
  border: solid #8c0000;
  border-width: 1px 0;
  line-height: 20px;
}

.sector .red {
  flex: none;
  width: 110px;
  padding-right: 5px;
  border-right: 1px solid #8c0000;
  font-size: 13px;
  text-align: right;
}

.sector span:first-child {
  flex: none;
}

.sector .cut {
  flex: none;
  padding-left: 10px;
}

.ticks {
  flex: 1;
  width: 179px;
  table-layout: fixed;
}

.ticks tr {
  height: 19px;
  font-size: 14px;
}

.ticks th {
  width: 59px;
  padding-left: 2px;
}

.ticks td {
  font-weight: bold;
  text-align: right;
}

.ticks th + td {
  width: 59px;
}

.quote-tabs {
  border-top: 1px solid #8c0000;
}

/* bottom rows */
.indices {
  display: grid;
  grid-template-columns: 340fr 353fr 358fr 82fr;
  height: 20px;
  border-bottom: 1px solid #8c0000;
  line-height: 19px;
}

.indices p {
  display: flex;
  padding: 0 1px;
  color: #f04444;
  font-size: 14px;
  text-align: right;
  white-space: nowrap;
}

.indices p + p {
  border-left: 1px solid #8c0000;
}

.indices span {
  color: #ff9;
  font-size: 16px;
}

.indices b {
  width: 70px;
}

.indices b:nth-child(2) {
  width: 78px;
}

.indices b:nth-child(3) {
  width: 79px;
}

.indices b.cyan {
  flex: 1;
}

.status {
  display: flex;
  height: 19px;
  border-bottom: 1px solid #c88;
  line-height: 18px;
}

.status a {
  padding: 0 4px 0 3px;
  border-right: 1px solid #8c0000;
}

.status time {
  margin-left: auto;
  padding-right: 1px;
  color: #ff3;
  font-size: 14px;
  font-weight: bold;
}

/* badge over the top right corner */
.site-badge {
  position: absolute;
  top: 2px;
  right: 2px;
  display: flex;
  gap: 5px;
  width: 200px;
  height: 55px;
  padding-left: 1px;
  background: rgba(20, 20, 24, .9);
}

.site-badge p {
  display: flex;
  flex-direction: column;
  padding-top: 5px;
  font-style: italic;
  line-height: 24px;
}

.site-badge b {
  background: linear-gradient(#ffb040, #e05820);
  background-clip: text;
  color: transparent;
  font-size: 22px;
  font-weight: 900;
}

.site-badge em {
  color: #f0e030;
  font-family: "DejaVu Sans", sans-serif;
  font-size: 16px;
  font-weight: bold;
}
```
